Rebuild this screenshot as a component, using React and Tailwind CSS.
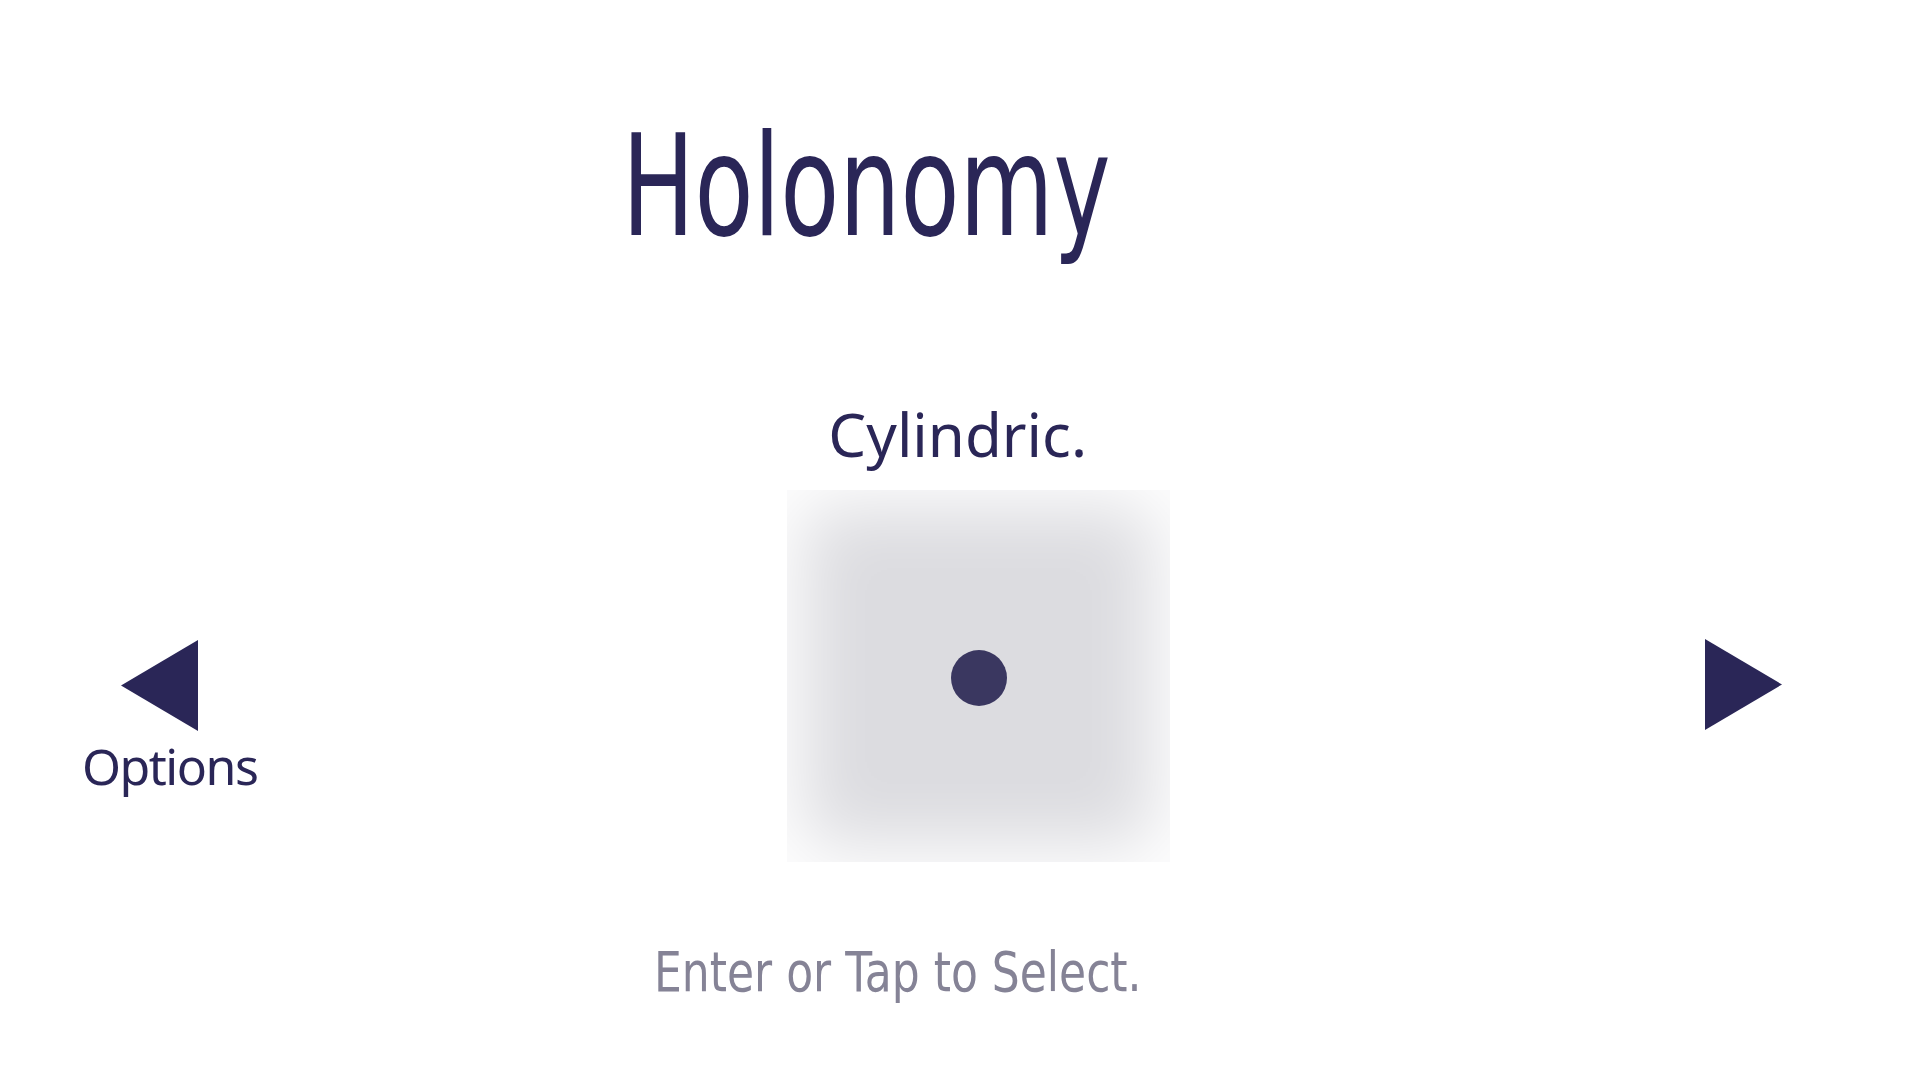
export default function App() {
  return (
    <div className="w-[1920px] h-[1080px] bg-white flex flex-col overflow-hidden">
      <h1
        className="ml-[622px] mt-[117px] self-start origin-left scale-x-[0.689] text-[140px] leading-none text-[#2a2657] font-normal whitespace-nowrap"
        style={{ fontFamily: '"DejaVu Sans", sans-serif' }}
      >
        Holonomy
      </h1>

      <div className="flex items-start -mt-[1px]">
        <div className="ml-[82px] mt-[384px] flex flex-col items-start">
          <svg width="77" height="91" viewBox="0 0 77 91" className="ml-[39px]">
            <polygon points="0,45.5 77,0 77,91" fill="#2a2657" />
          </svg>
          <div
            className="mt-[10px] text-[50px] leading-none tracking-[-1.5px] text-[#2a2657]"
            style={{ fontFamily: '"Noto Sans", sans-serif' }}
          >
            Options
          </div>
        </div>

        <div className="ml-[392px] mt-[148px] flex flex-col items-start">
          <div
            className="ml-[179px] text-[60px] leading-none text-[#2a2657]"
            style={{ fontFamily: '"Noto Sans", sans-serif' }}
          >
            Cylindric.
          </div>
          <div className="ml-[138px] mt-[26px] w-[383px] h-[372px] bg-[#dcdce0] shadow-[inset_0_0_70px_16px_#ffffff] flex items-center justify-center">
            <div className="mt-[4px] w-[56px] h-[56px] rounded-full bg-[#3a3760]" />
          </div>
          <div
            className="ml-[5px] mt-[82px] origin-left scale-x-[0.786] text-[56px] leading-none text-[#858396] whitespace-nowrap"
            style={{ fontFamily: '"DejaVu Sans", sans-serif' }}
          >
            Enter or Tap to Select.
          </div>
        </div>

        <svg width="77" height="91" viewBox="0 0 77 91" className="ml-auto mr-[138px] mt-[383px]">
          <polygon points="0,0 77,45.5 0,91" fill="#2a2657" />
        </svg>
      </div>
    </div>
  );
}
